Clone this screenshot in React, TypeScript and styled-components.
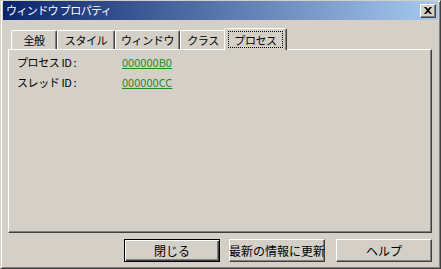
import React from 'react';
import styled, { createGlobalStyle } from 'styled-components';

const GlobalStyle = createGlobalStyle`
  html, body {
    margin: 0;
    padding: 0;
    background: #d4d0c8;
  }
  body {
    font-family: "Noto Sans CJK JP", "Liberation Sans", sans-serif;
    font-size: 12px;
  }
`;

const tabs = [
  { label: '全般', width: 46 },
  { label: 'スタイル', width: 58 },
  { label: 'ウィンドウ', width: 65 },
  { label: 'クラス', width: 46 },
  { label: 'プロセス', width: 59 },
];

const rows = [
  { label: 'プロセス ID :', value: '000000B0' },
  { label: 'スレッド ID :', value: '000000CC' },
];

const CloseIcon = () => (
  <svg width="8" height="7" viewBox="0 0 8 7">
    <path d="M0 0h2l2 2 2-2h2L5 3.5 8 7H6L4 5 2 7H0l3-3.5z" fill="#000" />
  </svg>
);

export default function App() {
  return (
    <>
      <GlobalStyle />
      <Window>
        <TitleBar>
          <TitleText>ウィンドウ プロパティ</TitleText>
          <CloseButton>
            <CloseIcon />
          </CloseButton>
        </TitleBar>
        <Body>
          <TabRow>
            {tabs.map((t, i) => {
              const active = i === tabs.length - 1;
              return (
                <Tab key={t.label} $active={active} $width={t.width}>
                  {active ? <FocusRect>{t.label}</FocusRect> : t.label}
                </Tab>
              );
            })}
          </TabRow>
          <Panel>
            {rows.map((r) => (
              <InfoRow key={r.label}>
                <InfoLabel>{r.label}</InfoLabel>
                <InfoLink>{r.value}</InfoLink>
              </InfoRow>
            ))}
          </Panel>
          <ButtonBar>
            <Button $default>閉じる</Button>
            <Button>最新の情報に更新</Button>
            <Button $gap={11}>ヘルプ</Button>
          </ButtonBar>
        </Body>
      </Window>
    </>
  );
}

const Window = styled.div`
  box-sizing: border-box;
  width: 441px;
  height: 269px;
  display: flex;
  flex-direction: column;
  background: #d4d0c8;
  border: 1px solid;
  border-color: #d4d0c8 #404040 #404040 #d4d0c8;
  box-shadow: inset 1px 1px #ffffff, inset -1px -1px #808080;
  padding: 0 2px 2px 2px;
`;

const TitleBar = styled.div`
  height: 19px;
  display: flex;
  align-items: center;
  padding: 0 2px 0 3px;
  background: linear-gradient(to right, #0a246a, #a6caf0);
`;

const TitleText = styled.span`
  flex: 1;
  color: #ffffff;
  font-size: 11px;
  letter-spacing: -0.6px;
  line-height: 19px;
  white-space: nowrap;
`;

const CloseButton = styled.div`
  box-sizing: border-box;
  width: 16px;
  height: 14px;
  display: flex;
  align-items: center;
  justify-content: center;
  background: #d4d0c8;
  border: 1px solid;
  border-color: #ffffff #404040 #404040 #ffffff;
  box-shadow: inset -1px -1px #808080;
`;

const Body = styled.div`
  flex: 1;
  display: flex;
  flex-direction: column;
  padding: 8px 6px 0 5px;
`;

const TabRow = styled.div`
  display: flex;
  align-items: flex-end;
  height: 21px;
  padding-left: 3px;
  position: relative;
  z-index: 1;
`;

const Tab = styled.div<{ $active?: boolean; $width: number }>`
  box-sizing: border-box;
  width: ${(p) => p.$width + (p.$active ? 4 : 0)}px;
  height: ${(p) => (p.$active ? 22 : 19)}px;
  margin: ${(p) => (p.$active ? '0 -2px -1px -2px' : '0')};
  display: flex;
  align-items: ${(p) => (p.$active ? 'stretch' : 'center')};
  justify-content: center;
  padding: ${(p) => (p.$active ? '2px 3px 2px 3px' : '0 0 1px 0')};
  background: #d4d0c8;
  border-top: 1px solid #ffffff;
  border-left: 1px solid #ffffff;
  border-right: 1px solid #404040;
  box-shadow: inset -1px 0 #808080;
  border-radius: 2px 2px 0 0;
  color: #000000;
  font-size: 11px;
  letter-spacing: -0.4px;
  white-space: nowrap;
`;

const FocusRect = styled.span`
  flex: 1;
  display: flex;
  align-items: center;
  justify-content: center;
  border: 1px dotted #000000;
`;

const Panel = styled.div`
  box-sizing: border-box;
  height: 184px;
  display: flex;
  flex-direction: column;
  gap: 8px;
  padding: 6px 0 0 8px;
  border: 1px solid;
  border-color: #ffffff #404040 #404040 #ffffff;
  box-shadow: inset -1px -1px #808080;
`;

const InfoRow = styled.div`
  display: flex;
  align-items: center;
  height: 12px;
  line-height: 12px;
  font-size: 11px;
`;

const InfoLabel = styled.span`
  width: 105px;
  color: #000000;
  letter-spacing: -0.4px;
`;

const InfoLink = styled.span`
  color: #1e8c1e;
  text-decoration: underline;
`;

const ButtonBar = styled.div`
  display: flex;
  justify-content: flex-end;
  padding-top: 6px;
`;

const Button = styled.div<{ $default?: boolean; $gap?: number }>`
  box-sizing: border-box;
  width: 96px;
  height: 23px;
  margin-left: ${(p) => p.$gap ?? 9}px;
  display: flex;
  align-items: center;
  justify-content: center;
  background: #d4d0c8;
  border: 1px solid;
  border-color: ${(p) =>
    p.$default ? '#000000' : '#ffffff #404040 #404040 #ffffff'};
  box-shadow: ${(p) =>
    p.$default
      ? 'inset 1px 1px #ffffff, inset -1px -1px #404040, inset -2px -2px #808080'
      : 'inset -1px -1px #808080'};
  color: #000000;
  font-size: 12px;
  white-space: nowrap;
`;
